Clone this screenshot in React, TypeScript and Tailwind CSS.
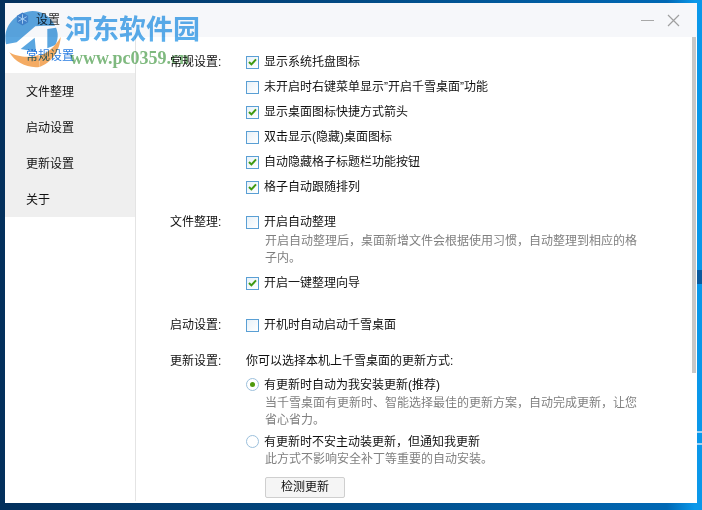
import React from 'react';

const font = { fontFamily: '"Liberation Sans", "Noto Sans CJK SC", sans-serif' };

const Check = ({ checked }: { checked?: boolean }) => (
  <span className="w-[13px] h-[13px] shrink-0 border border-[#5a9fd4] bg-gradient-to-br from-[#e8f1f8] to-white flex items-center justify-center">
    {checked && (
      <svg width="9" height="8" viewBox="0 0 9 8">
        <path d="M1 4 L3.4 6.4 L8 1.4" fill="none" stroke="#3f9a12" strokeWidth="2" />
      </svg>
    )}
  </span>
);

const Radio = ({ checked }: { checked?: boolean }) => (
  <span className="w-[13px] h-[13px] shrink-0 rounded-full border border-[#9cc0dc] bg-white flex items-center justify-center">
    {checked && <span className="w-[5px] h-[5px] rounded-full bg-[#4f9a0c]" />}
  </span>
);

const CheckRow = ({ checked, text }: { checked?: boolean; text: string }) => (
  <div className="h-[25px] flex items-center gap-[5px]">
    <Check checked={checked} />
    <span>{text}</span>
  </div>
);

const Hint = ({ className, children }: { className?: string; children: React.ReactNode }) => (
  <div className={`pl-[19px] text-[#808080] leading-[17px] w-[396px] ${className ?? ''}`}>{children}</div>
);

const Section = ({ label, className, children }: { label: string; className?: string; children: React.ReactNode }) => (
  <div className={`flex ${className ?? ''}`}>
    <div className="w-[76px] shrink-0 h-[25px] flex items-center">{label}:</div>
    <div className="flex-1 min-w-0">{children}</div>
  </div>
);

const menu = ['文件整理', '启动设置', '更新设置', '关于'];

export default function App() {
  return (
    <div
      className="relative w-[702px] h-[510px] overflow-hidden bg-[linear-gradient(90deg,#03305c_0%,#024a84_50%,#0068b4_95%,#0a98ea_99%)] pt-[3px] pl-[5px]"
      style={font}
    >
      <div className="w-[692px] h-[500px] bg-white flex flex-col text-[12px] text-[#111]">
        <header className="h-[34px] shrink-0 bg-[#f6f7fa] flex items-center pl-[31px] pr-[17px]">
          <span className="text-[#333]">设置</span>
          <div className="ml-auto flex items-center gap-[13px]">
            <span className="w-[13px] h-px bg-[#a8a8a8]" />
            <svg width="13" height="13" viewBox="0 0 13 13">
              <path d="M1 1 L12 12 M12 1 L1 12" stroke="#a0a0a0" strokeWidth="1.2" fill="none" />
            </svg>
          </div>
        </header>
        <div className="flex-1 min-h-0 flex">
          <aside className="w-[131px] shrink-0 border-r border-[#e4e4e4] mb-[2px]">
            <div className="h-[36px] flex items-center pl-[21px] pt-[2px] text-[#2a7de1]">常规设置</div>
            <div className="bg-[#efefef] h-[144px]">
              {menu.map(m => (
                <div key={m} className="h-[36px] flex items-center pl-[21px] pt-[2px]">{m}</div>
              ))}
            </div>
          </aside>
          <main className="flex-1 min-w-0 pl-[34px] pt-[12.5px]">
            <Section label="常规设置">
              <CheckRow checked text="显示系统托盘图标" />
              <CheckRow text="未开启时右键菜单显示”开启千雪桌面”功能" />
              <CheckRow checked text="显示桌面图标快捷方式箭头" />
              <CheckRow text="双击显示(隐藏)桌面图标" />
              <CheckRow checked text="自动隐藏格子标题栏功能按钮" />
              <CheckRow checked text="格子自动跟随排列" />
            </Section>
            <Section label="文件整理" className="mt-[10px]">
              <CheckRow text="开启自动整理" />
              <Hint className="-mt-[2px]">开启自动整理后，桌面新增文件会根据使用习惯，自动整理到相应的格子内。</Hint>
              <div className="mt-[4px]">
                <CheckRow checked text="开启一键整理向导" />
              </div>
            </Section>
            <Section label="启动设置" className="mt-[17px]">
              <CheckRow text="开机时自动启动千雪桌面" />
            </Section>
            <Section label="更新设置" className="mt-[11px]">
              <div className="h-[25px] flex items-center">你可以选择本机上千雪桌面的更新方式:</div>
              <div className="h-[22px] flex items-center gap-[5px]">
                <Radio checked />
                <span>有更新时自动为我安装更新(推荐)</span>
              </div>
              <Hint className="-mt-[1px]">当千雪桌面有更新时、智能选择最佳的更新方案，自动完成更新，让您省心省力。</Hint>
              <div className="h-[22px] mt-[2px] flex items-center gap-[5px]">
                <Radio />
                <span>有更新时不安主动装更新，但通知我更新</span>
              </div>
              <Hint className="-mt-[2px]">此方式不影响安全补丁等重要的自动安装。</Hint>
              <button className="mt-[9px] ml-[19px] w-[80px] h-[21px] border border-[#cfcfcf] rounded-[2px] bg-[#f5f5f5] flex items-center justify-center text-[12px]">
                检测更新
              </button>
            </Section>
          </main>
          <div className="w-[4px] shrink-0 bg-[#c8c8c8] mr-[1px] h-[336px]" />
        </div>
      </div>

      {/* wallpaper streaks on the right edge */}
      <div className="absolute left-[697px] top-[270px] w-[5px] h-[14px] bg-[#0a5a9e]" />
      <div className="absolute left-[697px] top-[431px] w-[5px] h-[2px] bg-[#9fd4f4]" />
      <div className="absolute left-[697px] top-[443px] w-[5px] h-[2px] bg-[#9fd4f4]" />

      {/* watermark over the top left corner, text below shows through */}
      <svg className="absolute left-0 top-[5px] mix-blend-multiply" width="80" height="70" viewBox="0 0 240 210">
        <path d="M18 118 C6 62 50 20 98 18 C126 18 150 32 165 62 L132 62 L106 64 L50 112 Z" fill="#5aa6e0" />
        <path d="M142 72 L168 68 C176 86 174 104 166 120 L142 130 Z" fill="#5aa6e0" />
        <path d="M62 132 L104 98 L108 140 Z" fill="#5aa6e0" />
        <path d="M28 142 C50 156 90 160 116 150 L118 186 C80 190 46 172 28 142 Z" fill="#f4ab63" />
        <path d="M118 152 C142 146 166 124 182 96 C180 140 150 176 118 186 Z" fill="#f4ab63" />
      </svg>
      <div
        className="absolute left-[65px] top-[9px] text-[#5aaeec] text-[27px] leading-[38px] font-bold mix-blend-multiply"
        style={{ fontFamily: '"Noto Sans CJK SC", sans-serif' }}
      >
        河东软件园
      </div>
      <div
        className="absolute left-[70px] top-[47px] text-[#5fa85f] text-[18px] leading-[22px] font-bold opacity-80 mix-blend-multiply"
        style={{ fontFamily: '"Liberation Serif", serif' }}
      >
        www.pc0359.cn
      </div>
      <svg className="absolute left-[15px] top-[11px]" width="15" height="16" viewBox="0 0 16 16">
        <path d="M8 1 L14 4.5 L14 11.5 L8 15 L2 11.5 L2 4.5 Z" fill="#3f7fc8" />
        <path d="M8 3 V13 M3.5 5.5 L12.5 10.5 M12.5 5.5 L3.5 10.5" stroke="#a9d0f2" strokeWidth="1" />
      </svg>
    </div>
  );
}
